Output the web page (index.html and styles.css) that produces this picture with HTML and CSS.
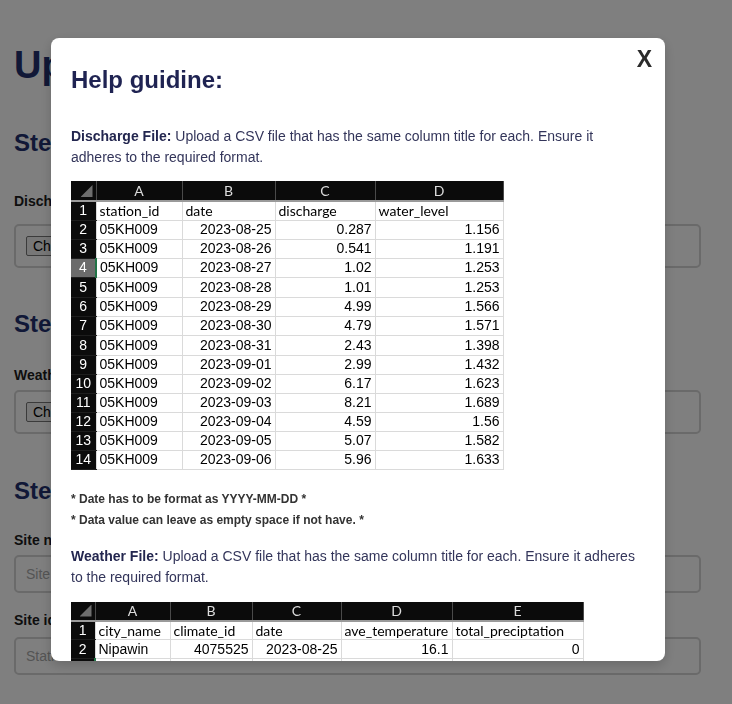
FILE: index.html
```html
<!DOCTYPE html>
<html lang="en">
<head>
<meta charset="utf-8">
<title>Upload Files</title>
<link rel="stylesheet" href="styles.css">
</head>
<body>
<div class="page">
  <h1 class="page-title">Upload Files</h1>

  <h2 class="step-title step-a">Step 1: Upload discharge data</h2>
  <div class="field-label label-a">Discharge File</div>
  <div class="box box-file box-a"><span class="file-btn">Choose File</span><span class="file-none">No file chosen</span></div>

  <h2 class="step-title step-b">Step 2: Upload weather data</h2>
  <div class="field-label label-b">Weather File</div>
  <div class="box box-file box-b"><span class="file-btn">Choose File</span><span class="file-none">No file chosen</span></div>

  <h2 class="step-title step-c">Step 3: Site information</h2>
  <div class="field-label label-c">Site name</div>
  <div class="box box-text box-c"><span class="placeholder">Site name</span></div>
  <div class="field-label label-d">Site id</div>
  <div class="box box-text box-d"><span class="placeholder">Station id</span></div>
</div>

<div class="overlay">
  <div class="modal">
    <span class="close">X</span>
    <h2 class="modal-title">Help guidine:</h2>

    <p class="info info-a"><b>Discharge File:</b> Upload a CSV file that has the same column title for each. Ensure it adheres to the required format.</p>

    <table class="sheet sheet-a">
      <colgroup>
        <col class="w25"><col class="w86"><col class="w93"><col class="w100"><col class="w128">
      </colgroup>
      <tr class="hdr"><th class="corner"><span class="tri"></span></th><th class="col">A</th><th class="col">B</th><th class="col">C</th><th class="col">D</th></tr>
      <tr class="row"><th class="num">1</th><td class="ttl">station_id</td><td class="ttl">date</td><td class="ttl">discharge</td><td class="ttl">water_level</td></tr>
      <tr class="row"><th class="num">2</th><td>05KH009</td><td class="r">2023-08-25</td><td class="r">0.287</td><td class="r">1.156</td></tr>
      <tr class="row"><th class="num">3</th><td>05KH009</td><td class="r">2023-08-26</td><td class="r">0.541</td><td class="r">1.191</td></tr>
      <tr class="row"><th class="num sel">4</th><td>05KH009</td><td class="r">2023-08-27</td><td class="r">1.02</td><td class="r">1.253</td></tr>
      <tr class="row tall"><th class="num">5</th><td>05KH009</td><td class="r">2023-08-28</td><td class="r">1.01</td><td class="r">1.253</td></tr>
      <tr class="row"><th class="num">6</th><td>05KH009</td><td class="r">2023-08-29</td><td class="r">4.99</td><td class="r">1.566</td></tr>
      <tr class="row"><th class="num">7</th><td>05KH009</td><td class="r">2023-08-30</td><td class="r">4.79</td><td class="r">1.571</td></tr>
      <tr class="row tall"><th class="num">8</th><td>05KH009</td><td class="r">2023-08-31</td><td class="r">2.43</td><td class="r">1.398</td></tr>
      <tr class="row"><th class="num">9</th><td>05KH009</td><td class="r">2023-09-01</td><td class="r">2.99</td><td class="r">1.432</td></tr>
      <tr class="row"><th class="num">10</th><td>05KH009</td><td class="r">2023-09-02</td><td class="r">6.17</td><td class="r">1.623</td></tr>
      <tr class="row"><th class="num">11</th><td>05KH009</td><td class="r">2023-09-03</td><td class="r">8.21</td><td class="r">1.689</td></tr>
      <tr class="row"><th class="num">12</th><td>05KH009</td><td class="r">2023-09-04</td><td class="r">4.59</td><td class="r">1.56</td></tr>
      <tr class="row"><th class="num">13</th><td>05KH009</td><td class="r">2023-09-05</td><td class="r">5.07</td><td class="r">1.582</td></tr>
      <tr class="row"><th class="num">14</th><td>05KH009</td><td class="r">2023-09-06</td><td class="r">5.96</td><td class="r">1.633</td></tr>
    </table>

    <p class="note note-a">* Date has to be format as YYYY-MM-DD *</p>
    <p class="note">* Data value can leave as empty space if not have. *</p>

    <p class="info info-b"><b>Weather File:</b> Upload a CSV file that has the same column title for each. Ensure it adheres to the required format.</p>

    <table class="sheet sheet-b">
      <colgroup>
        <col class="w24"><col class="w75"><col class="w82"><col class="w89"><col class="w111"><col class="w131">
      </colgroup>
      <tr class="hdr2"><th class="corner"><span class="tri"></span></th><th class="col">A</th><th class="col">B</th><th class="col">C</th><th class="col">D</th><th class="col">E</th></tr>
      <tr class="row2"><th class="num">1</th><td class="ttl">city_name</td><td class="ttl">climate_id</td><td class="ttl">date</td><td class="ttl">ave_temperature</td><td class="ttl">total_preciptation</td></tr>
      <tr class="row2"><th class="num">2</th><td>Nipawin</td><td class="r">4075525</td><td class="r">2023-08-25</td><td class="r">16.1</td><td class="r">0</td></tr>
      <tr class="row2"><th class="num sel"></th><td></td><td></td><td></td><td></td><td></td></tr>
    </table>
  </div>
</div>
</body>
</html>
```

FILE: styles.css
```css
html, body {
  margin: 0;
  padding: 0;
  background: #ffffff;
}

body {
  font-family: "Liberation Sans", Arial, sans-serif;
  overflow: hidden;
  height: 704px;
}

/* ---------- background page ---------- */
.page {
  width: 687px;
  padding: 0 0 0 14px;
}

.page-title {
  margin: 43px 0 0;
  font-size: 38px;
  line-height: 44px;
  font-weight: bold;
  color: #22306e;
}

.step-title {
  margin: 0;
  font-size: 24px;
  line-height: 28px;
  font-weight: bold;
  color: #22306e;
}

.step-a { margin-top: 42px; }
.step-b { margin-top: 42px; }
.step-c { margin-top: 43px; }

.field-label {
  font-size: 14px;
  line-height: 16px;
  font-weight: bold;
  color: #1c1c1c;
}

.label-a { margin-top: 36px; }
.label-b { margin-top: 29px; }
.label-c { margin-top: 27px; }
.label-d { margin-top: 19px; }

.box {
  box-sizing: border-box;
  border: 2px solid #d4d4d4;
  border-radius: 5px;
  background: #ffffff;
  display: flex;
  align-items: center;
  padding: 0 10px;
}

.box-file { height: 44px; }
.box-text { height: 38px; }

.box-a { margin-top: 15px; }
.box-b { margin-top: 7px; }
.box-c { margin-top: 7px; }
.box-d { margin-top: 9px; }

.file-btn {
  font-size: 14px;
  line-height: 16px;
  padding: 1px 6px;
  border: 1px solid #767676;
  border-radius: 2px;
  background: #efefef;
  color: #000;
}

.file-none {
  font-size: 14px;
  margin-left: 6px;
  color: #000;
}

.placeholder {
  font-size: 14px;
  color: #a9a9a9;
}

/* ---------- overlay + modal ---------- */
.overlay {
  position: fixed;
  inset: 0;
  background: rgba(0, 0, 0, 0.5);
}

.modal {
  position: relative;
  box-sizing: border-box;
  margin: 38px 0 0 51px;
  width: 614px;
  height: 623px;
  padding: 20px 20px 0;
  background: #ffffff;
  border-radius: 8px;
  overflow: hidden;
  box-shadow: 0 4px 12px rgba(0, 0, 0, 0.18);
  color: #33355a;
}

.close {
  position: absolute;
  top: 9px;
  right: 13px;
  font-size: 23px;
  line-height: 24px;
  font-weight: bold;
  color: #2b2b2b;
}

.modal-title {
  margin: 7px 0 0;
  font-size: 24px;
  line-height: 30px;
  font-weight: bold;
  color: #1f2352;
}

.info {
  margin: 0;
  font-size: 14px;
  line-height: 21px;
  color: #33355a;
}

.info b { color: #23264f; }

.info-a { margin-top: 31px; }
.info-b { margin-top: 15px; }

.note {
  margin: 0;
  font-size: 12px;
  line-height: 21px;
  font-weight: bold;
  color: #333333;
}

.note-a { margin-top: 19px; }

/* ---------- spreadsheet tables ---------- */
.sheet {
  border-collapse: collapse;
  table-layout: fixed;
  background: #ffffff;
}

.sheet-a { margin-top: 13px; width: 432px; }
.sheet-b { margin-top: 14px; width: 512px; }

.w24 { width: 24px; }
.w25 { width: 25px; }
.w75 { width: 75px; }
.w82 { width: 82px; }
.w86 { width: 86px; }
.w89 { width: 89px; }
.w93 { width: 93px; }
.w100 { width: 100px; }
.w111 { width: 111px; }
.w128 { width: 128px; }
.w131 { width: 131px; }

.hdr { height: 20px; }
.row { height: 19px; }
.row.tall { height: 20px; }
.hdr2 { height: 19px; }
.row2 { height: 19px; }

.sheet th,
.sheet td {
  padding: 0 3px;
  white-space: nowrap;
  overflow: hidden;
  font-weight: normal;
}

.sheet td {
  font-family: "Liberation Sans", Arial, sans-serif;
  font-size: 14px;
  line-height: 17px;
  color: #000000;
  border: 1px solid #dadada;
  text-align: left;
}

.sheet td.r { text-align: right; }

.sheet td.ttl {
  font-family: Lato, "Liberation Sans", sans-serif;
  font-size: 14px;
}

.corner {
  background: #0b0b0b;
  text-align: right;
  vertical-align: bottom;
  border-bottom: 2px solid #9a9a9a;
  border-right: 1px solid #4a4a4a;
  line-height: 0;
}

.sheet th.corner { padding: 0 3px 3px 0; }

.tri {
  display: inline-block;
  width: 12px;
  height: 12px;
  background: #6e6e6e;
  clip-path: polygon(100% 0, 100% 100%, 0 100%);
}

.col {
  background: #0b0b0b;
  color: #dcdcdc;
  font-family: Lato, "Liberation Sans", sans-serif;
  font-size: 14px;
  line-height: 17px;
  text-align: center;
  border-right: 1px solid #4a4a4a;
  border-bottom: 2px solid #9a9a9a;
}

.num {
  background: #0b0b0b;
  color: #ffffff;
  font-family: "Liberation Sans", Arial, sans-serif;
  font-size: 14px;
  line-height: 17px;
  text-align: center;
  border-top: 1px solid #1e1e1e;
  border-bottom: 1px solid #1e1e1e;
}

.sheet th.num { padding: 0; }

.num.sel {
  background: #6b6b6b;
  border-right: 2px solid #217346;
}

.sheet-b .num.sel {
  background: #0b0b0b;
}
```
